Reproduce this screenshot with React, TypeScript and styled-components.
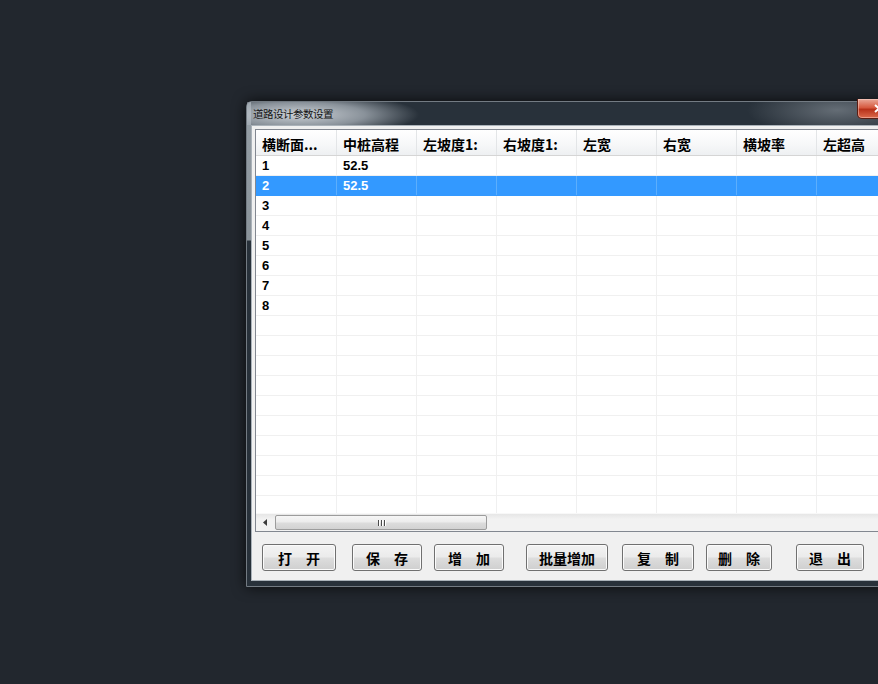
import styled, { createGlobalStyle } from 'styled-components';

const GlobalStyle = createGlobalStyle`
  html, body {
    margin: 0;
    padding: 0;
    background: #22272e;
  }
  body {
    font-family: "Noto Sans CJK SC", "Liberation Sans", sans-serif;
  }
`;

const Desktop = styled.div`
  width: 878px;
  height: 684px;
  box-sizing: border-box;
  padding: 101px 0 0 246px;
  overflow: hidden;
  display: flex;
  align-items: flex-start;
  background: #22272e;
`;

const Window = styled.div`
  flex: 0 0 auto;
  width: 660px;
  height: 486px;
  box-sizing: border-box;
  padding: 0 5px 5px 4px;
  display: flex;
  flex-direction: column;
  border: 1px solid #737b83;
  border-radius: 6px 6px 0 0;
  background:
    linear-gradient(180deg, #959ea5 0, #8a939a 138px, rgba(0, 0, 0, 0) 139px) left top / 4px 100% no-repeat,
    #28313a;
  box-shadow: 0 0 14px rgba(0, 0, 0, 0.75);
`;

const TitleBar = styled.div`
  position: relative;
  height: 23px;
  flex: 0 0 23px;
  display: flex;
  align-items: center;
  margin-left: -4px;
  padding-left: 6px;
  background:
    radial-gradient(ellipse 120px 22px at 52px 55%, rgba(214, 219, 224, 0.95) 0%, rgba(170, 178, 186, 0.75) 55%, rgba(40, 49, 58, 0) 100%),
    radial-gradient(ellipse 90px 26px at 590px 35%, rgba(150, 158, 166, 0.55) 0%, rgba(40, 49, 58, 0) 100%);
`;

const TitleText = styled.span`
  font-size: 10.5px;
  line-height: 14px;
  color: #141414;
  letter-spacing: -0.5px;
`;

const CloseButton = styled.div`
  position: absolute;
  left: 610px;
  top: -3px;
  width: 43px;
  height: 20px;
  box-sizing: border-box;
  border: 1px solid #5a1d12;
  border-top: none;
  border-radius: 0 0 5px 5px;
  background: linear-gradient(180deg, #eaa999 0%, #d65a40 45%, #b8321a 55%, #dc6a4c 100%);
  box-shadow: inset 0 0 0 1px rgba(255, 220, 210, 0.45);
  display: flex;
  align-items: center;
  justify-content: center;
`;

const Client = styled.div`
  flex: 1;
  display: flex;
  flex-direction: column;
  padding: 3px 3px 0 3px;
  background: #f0f0f0;
  border: 1px solid #aab2b9;
  overflow: hidden;
`;

const Grid = styled.div`
  flex: 0 0 auto;
  display: flex;
  flex-direction: column;
  border: 1px solid #828790;
  background: #fff;
  overflow: hidden;
`;

const HeaderRow = styled.div`
  display: grid;
  grid-template-columns: 81px repeat(7, 80px);
  height: 26px;
  box-sizing: border-box;
  border-bottom: 1px solid #d5d5d5;
  background: linear-gradient(180deg, #ffffff 0%, #f7f8f9 55%, #eef0f2 100%);
`;

const HeaderCell = styled.div`
  display: flex;
  align-items: center;
  padding: 2px 0 0 6px;
  border-right: 1px solid #e3e5e7;
  font-size: 14px;
  font-weight: 700;
  color: #000;
  white-space: nowrap;
  overflow: hidden;
`;

const Body = styled.div`
  height: 357px;
  overflow: hidden;
`;

const Row = styled.div<{ $selected?: boolean }>`
  display: grid;
  grid-template-columns: 81px repeat(7, 80px);
  height: 20px;
  box-sizing: border-box;
  border-bottom: 1px solid ${(p) => (p.$selected ? '#3399ff' : '#f0f0f0')};
  background: ${(p) => (p.$selected ? '#3399ff' : '#fff')};
  color: ${(p) => (p.$selected ? '#fff' : '#000')};
`;

const Cell = styled.div<{ $selected?: boolean }>`
  display: flex;
  align-items: center;
  padding-left: 6px;
  border-right: 1px solid ${(p) => (p.$selected ? '#5caefc' : '#f0f0f0')};
  font-family: "Liberation Sans", "Noto Sans CJK SC", sans-serif;
  font-size: 13px;
  font-weight: 700;
`;

const ScrollBar = styled.div`
  height: 17px;
  display: flex;
  align-items: center;
  background: linear-gradient(180deg, #e6e6e6 0%, #f2f2f2 30%, #f2f2f2 100%);
  border-top: 1px solid #f8f8f8;
`;

const ArrowButton = styled.div`
  width: 17px;
  height: 17px;
  display: flex;
  align-items: center;
  justify-content: center;
`;

const Thumb = styled.div`
  margin-left: 2px;
  width: 212px;
  height: 15px;
  box-sizing: border-box;
  border: 1px solid #9c9c9c;
  border-radius: 2px;
  background: linear-gradient(180deg, #f6f6f6 0%, #ececec 45%, #dcdcdc 55%, #d2d2d2 100%);
  display: flex;
  align-items: center;
  justify-content: center;
`;

const Grip = styled.div`
  display: flex;
  gap: 2px;
`;

const GripLine = styled.span`
  width: 1px;
  height: 6px;
  background: #4b4b4b;
  box-shadow: 1px 0 0 #fff;
`;

const ButtonRow = styled.div`
  display: flex;
  margin-top: 12px;
  padding-left: 7px;
`;

const Button = styled.button<{ $width: number; $offset: number }>`
  width: ${(p) => p.$width}px;
  height: 27px;
  margin-left: ${(p) => p.$offset}px;
  padding: 0;
  flex: 0 0 auto;
  border: 1px solid #707070;
  border-radius: 3px;
  background: linear-gradient(180deg, #f3f3f3 0%, #ebebeb 48%, #dddddd 52%, #cfcfcf 100%);
  box-shadow: inset 0 0 0 1px #fbfbfb;
  font-family: "Noto Sans CJK SC", sans-serif;
  font-size: 14px;
  font-weight: 700;
  color: #000;
  white-space: pre;
`;

const columns = ['横断面...', '中桩高程', '左坡度1:', '右坡度1:', '左宽', '右宽', '横坡率', '左超高'];

const rows: string[][] = Array.from({ length: 18 }, (_, i) => {
  const r = Array(8).fill('');
  if (i < 8) r[0] = String(i + 1);
  if (i < 2) r[1] = '52.5';
  return r;
});

const buttons = [
  { label: '打　开', width: 74, offset: 0 },
  { label: '保　存', width: 70, offset: 16 },
  { label: '增　加', width: 70, offset: 12 },
  { label: '批量增加', width: 82, offset: 22 },
  { label: '复　制', width: 72, offset: 14 },
  { label: '删　除', width: 66, offset: 12 },
  { label: '退　出', width: 68, offset: 24 },
];

const App = () => {
  return (
    <Desktop>
      <GlobalStyle />
      <Window>
        <TitleBar>
          <TitleText>道路设计参数设置</TitleText>
          <CloseButton>
            <svg width="10" height="9" viewBox="0 0 10 9">
              <path d="M1 1 L9 8 M9 1 L1 8" stroke="#fff" strokeWidth="2" />
            </svg>
          </CloseButton>
        </TitleBar>
        <Client>
          <Grid>
            <HeaderRow>
              {columns.map((c) => (
                <HeaderCell key={c}>{c}</HeaderCell>
              ))}
            </HeaderRow>
            <Body>
              {rows.map((r, i) => (
                <Row key={i} $selected={i === 1}>
                  {r.map((v, j) => (
                    <Cell key={j} $selected={i === 1}>
                      {v}
                    </Cell>
                  ))}
                </Row>
              ))}
            </Body>
            <ScrollBar>
              <ArrowButton>
                <svg width="4" height="7" viewBox="0 0 4 7">
                  <path d="M4 0 L0 3.5 L4 7 Z" fill="#3c3c3c" />
                </svg>
              </ArrowButton>
              <Thumb>
                <Grip>
                  <GripLine />
                  <GripLine />
                  <GripLine />
                </Grip>
              </Thumb>
            </ScrollBar>
          </Grid>
          <ButtonRow>
            {buttons.map((b) => (
              <Button key={b.label} $width={b.width} $offset={b.offset}>
                {b.label}
              </Button>
            ))}
          </ButtonRow>
        </Client>
      </Window>
    </Desktop>
  );
};

export default App;
